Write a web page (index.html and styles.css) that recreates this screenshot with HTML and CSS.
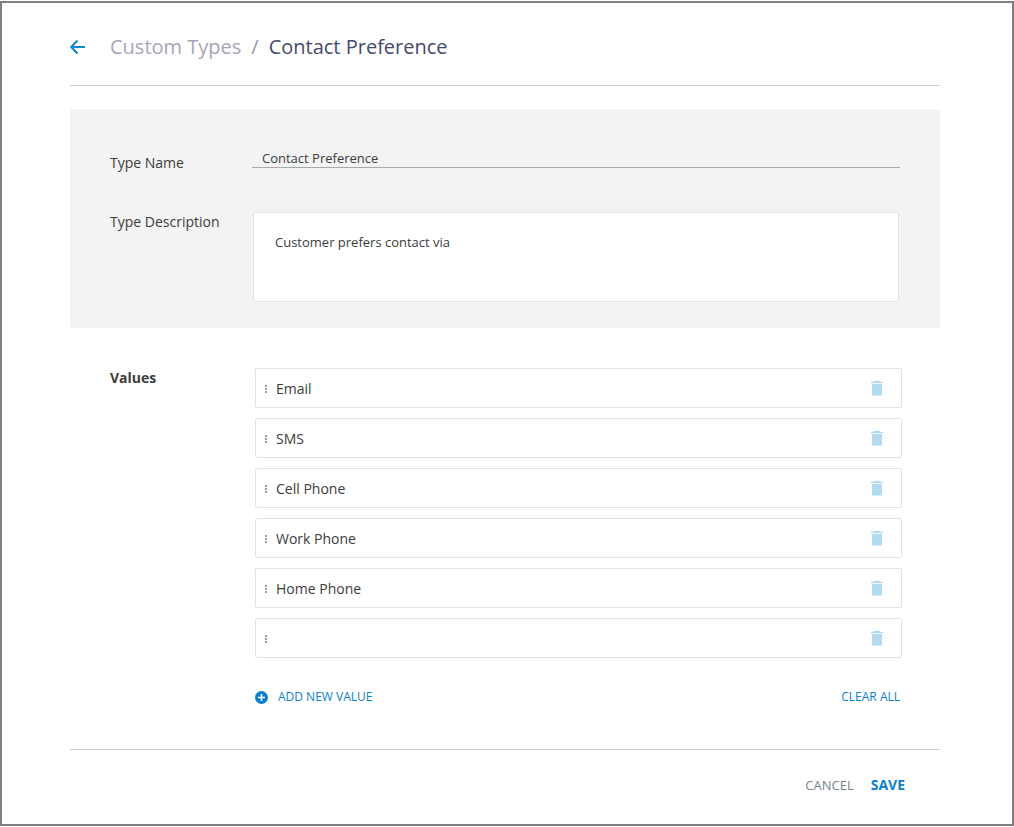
FILE: index.html
```html
<!DOCTYPE html>
<html lang="en">
<head>
<meta charset="utf-8">
<title>Contact Preference</title>
<link rel="stylesheet" href="styles.css">
</head>
<body>
<svg class="sprite" aria-hidden="true">
  <symbol id="trash" viewBox="0 0 12 16">
    <path d="M3 1.5Q3 .5 4 .5h4q1 0 1 1h3v2H0v-2z" opacity=".4"/>
    <path d="M3 1h6v1h3v1H0V2h3zM1 4h10v11q0 .5-.5.5h-9Q1 15.500 1 15z"/>
  </symbol>
  <symbol id="grip" viewBox="0 0 2 10">
    <path d="M0 2h2v2H0zM0 5h2v2H0zM0 8h2v2H0z"/>
  </symbol>
</svg>
<main class="page">
  <header class="header">
    <a class="back" href="#" aria-label="Back">
      <svg width="16" height="16" viewBox="0 0 16 16"><path d="M15 8H1.500M7.500 1.500 1.200 8l6.300 6.500" fill="none" stroke="currentColor" stroke-width="2"/></svg>
    </a>
    <a class="crumb" href="#">Custom Types</a>
    <span class="slash">/</span>
    <h1 class="title">Contact Preference</h1>
  </header>

  <form class="form">
    <section class="panel">
      <label class="label label-name" for="name">Type Name</label>
      <input class="name" id="name" type="text" value="Contact Preference">
      <label class="label" for="description">Type Description</label>
      <textarea class="description" id="description">Customer prefers contact via</textarea>
    </section>

    <section class="values">
      <h2 class="values-title">Values</h2>
      <div class="values-body">
        <ul class="list">
          <li class="item"><svg class="grip"><use href="#grip"/></svg><input class="value" type="text" aria-label="Value 1" value="Email"><button class="remove" type="button" aria-label="Delete value 1"><svg class="trash"><use href="#trash"/></svg></button></li>
          <li class="item"><svg class="grip"><use href="#grip"/></svg><input class="value" type="text" aria-label="Value 2" value="SMS"><button class="remove" type="button" aria-label="Delete value 2"><svg class="trash"><use href="#trash"/></svg></button></li>
          <li class="item"><svg class="grip"><use href="#grip"/></svg><input class="value" type="text" aria-label="Value 3" value="Cell Phone"><button class="remove" type="button" aria-label="Delete value 3"><svg class="trash"><use href="#trash"/></svg></button></li>
          <li class="item"><svg class="grip"><use href="#grip"/></svg><input class="value" type="text" aria-label="Value 4" value="Work Phone"><button class="remove" type="button" aria-label="Delete value 4"><svg class="trash"><use href="#trash"/></svg></button></li>
          <li class="item"><svg class="grip"><use href="#grip"/></svg><input class="value" type="text" aria-label="Value 5" value="Home Phone"><button class="remove" type="button" aria-label="Delete value 5"><svg class="trash"><use href="#trash"/></svg></button></li>
          <li class="item"><svg class="grip"><use href="#grip"/></svg><input class="value" type="text" aria-label="Value 6" value=""><button class="remove" type="button" aria-label="Delete value 6"><svg class="trash"><use href="#trash"/></svg></button></li>
        </ul>
        <div class="actions">
          <button class="link" type="button">
            <svg width="13" height="13" viewBox="0 0 13 13"><circle cx="6.500" cy="6.500" r="6.500" fill="currentColor"/><path d="M6.500 3v7M3 6.500h7" stroke="#fff" stroke-width="1.600"/></svg>
            ADD NEW VALUE
          </button>
          <button class="link" type="button">CLEAR ALL</button>
        </div>
      </div>
    </section>

    <footer class="footer">
      <button class="cancel" type="button">CANCEL</button>
      <button class="save" type="submit">SAVE</button>
    </footer>
  </form>
</main>
</body>
</html>
```
FILE: styles.css
```css
* {
  box-sizing: border-box;
}

body {
  margin: 0;
  padding: 1px 0;
  background: #fff;
  color: #3c3c3c;
  font-family: "Open Sans", "Noto Sans", sans-serif;
  font-size: 14px;
  line-height: 20px;
}

button,
input,
textarea {
  margin: 0;
  padding: 0;
  border: 0;
  background: none;
  color: inherit;
  font: inherit;
}

button {
  cursor: pointer;
}

a {
  text-decoration: none;
}

.sprite {
  position: absolute;
  width: 0;
  height: 0;
}

.page {
  min-height: calc(100vh - 2px);
  padding: 0 72px 0 68px;
  border: 2px solid #808080;
}

.header {
  display: flex;
  align-items: center;
  padding: 30px 0 24px;
  border-bottom: 1px solid #ccd0d2;
  font-size: 20px;
  line-height: 28px;
}

.back {
  display: flex;
  width: 40px;
  color: #0b87d4;
}

.crumb {
  color: #a5a6b8;
}

.slash {
  padding: 0 10px;
  color: #9697a8;
}

.title {
  margin: 0;
  color: #444a6e;
  font: inherit;
}

.panel {
  display: grid;
  grid-template-columns: 142px 1fr;
  row-gap: 44px;
  margin-top: 23px;
  padding: 39px 40px 26px;
  border-radius: 2px;
  background: #f3f3f3;
}

.label-name {
  padding-top: 5px;
  height: 20px;
}

.name {
  height: 20px;
  padding: 0 10px;
  border-bottom: 1px solid #a5aaaa;
  font-size: 13px;
}

.description {
  height: 90px;
  margin: 0 1px;
  padding: 19px 21px;
  border: 1px solid #dfe4e4;
  border-radius: 3px;
  background: #fff;
  font-size: 13px;
  resize: none;
}

.values {
  display: grid;
  grid-template-columns: 145px 1fr;
  padding: 40px 38px 42px 40px;
}

.values-title {
  margin: 0;
  font-size: 14px;
  line-height: 20px;
  font-weight: 700;
}

.list {
  display: grid;
  gap: 10px;
  margin: 0;
  padding: 0;
  list-style: none;
}

.item {
  display: flex;
  align-items: center;
  height: 40px;
  padding: 0 18px 0 9px;
  border: 1px solid #dfe4e4;
  border-radius: 2px;
}

.grip {
  width: 2px;
  height: 10px;
  fill: #999fa3;
}

.value {
  flex: 1;
  min-width: 0;
  margin-left: 9px;
  padding-top: 2px;
}

.remove {
  display: flex;
}

.trash {
  width: 12px;
  height: 16px;
  fill: #b2daf0;
}

.actions {
  display: flex;
  justify-content: space-between;
  padding: 29px 2px 0 0;
}

.link {
  display: flex;
  align-items: center;
  gap: 10px;
  color: #0b7fce;
  font-size: 12px;
  line-height: 20px;
}

.footer {
  display: flex;
  justify-content: flex-end;
  gap: 17px;
  padding: 25px 35px 0 0;
  border-top: 1px solid #cccecf;
}

.cancel {
  color: #768388;
  font-size: 13px;
}

.save {
  color: #0b80d0;
  font-weight: 700;
}
```
